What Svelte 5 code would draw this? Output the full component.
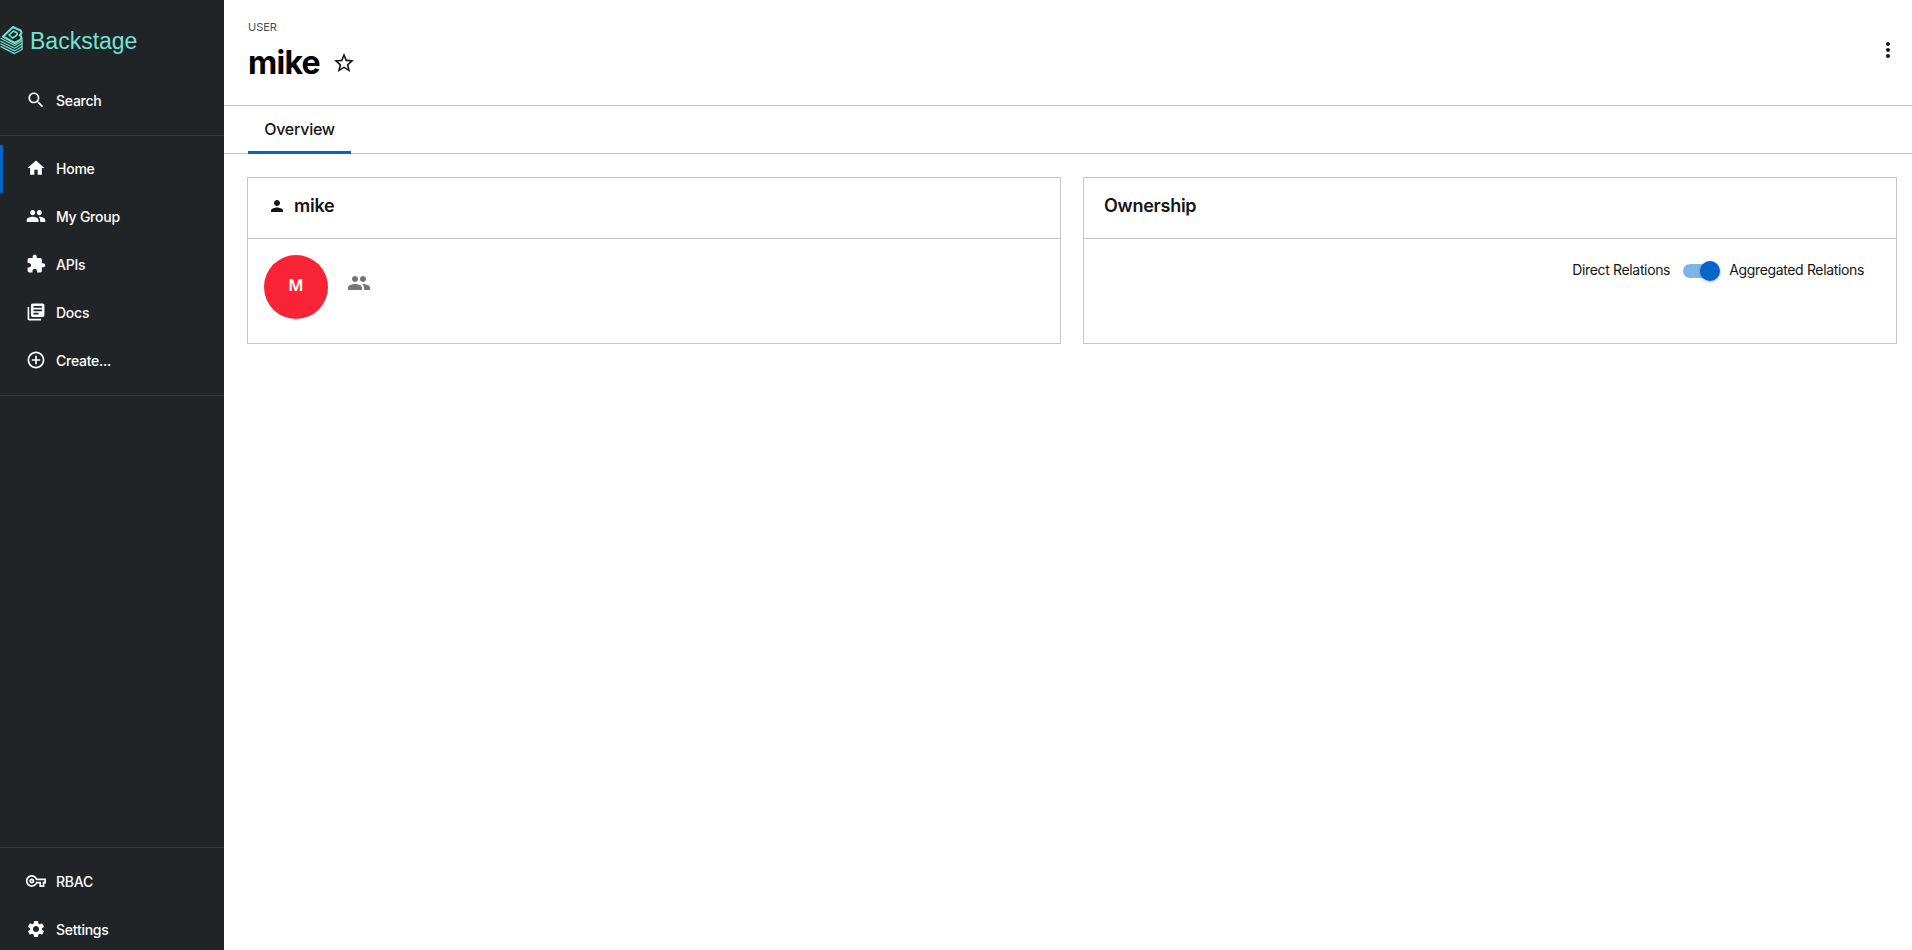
<script>
	const icons = {
		search: 'M15.5 14h-.79l-.28-.27C15.41 12.59 16 11.11 16 9.5 16 5.91 13.09 3 9.5 3S3 5.91 3 9.5 5.91 16 9.5 16c1.61 0 3.09-.59 4.23-1.57l.27.28v.79l5 4.99L20.49 19l-4.99-5zm-6 0C7.01 14 5 11.99 5 9.5S7.01 5 9.5 5 14 7.01 14 9.5 11.99 14 9.5 14z',
		home: 'M10 20v-6h4v6h5v-8h3L12 3 2 12h3v8z',
		group: 'M16 11c1.66 0 2.99-1.34 2.99-3S17.66 5 16 5c-1.66 0-3 1.34-3 3s1.34 3 3 3zm-8 0c1.66 0 2.99-1.34 2.99-3S9.66 5 8 5C6.34 5 5 6.34 5 8s1.34 3 3 3zm0 2c-2.33 0-7 1.17-7 3.5V19h14v-2.5c0-2.33-4.67-3.5-7-3.5zm8 0c-.29 0-.62.02-.97.05 1.16.84 1.97 1.97 1.97 3.45V19h6v-2.5c0-2.33-4.67-3.5-7-3.5z',
		extension: 'M20.5 11H19V7c0-1.1-.9-2-2-2h-4V3.5C13 2.12 11.88 1 10.5 1S8 2.12 8 3.5V5H4c-1.1 0-1.99.9-1.99 2v3.8H3.5c1.49 0 2.7 1.21 2.7 2.7s-1.21 2.7-2.7 2.7H2V20c0 1.1.9 2 2 2h3.8v-1.5c0-1.49 1.21-2.7 2.7-2.7 1.49 0 2.7 1.21 2.7 2.7V22H17c1.1 0 2-.9 2-2v-4h1.5c1.38 0 2.5-1.12 2.5-2.5S21.88 11 20.5 11z',
		docs: 'M4 6H2v14c0 1.1.9 2 2 2h14v-2H4V6zm16-4H8c-1.1 0-2 .9-2 2v12c0 1.1.9 2 2 2h12c1.1 0 2-.9 2-2V4c0-1.1-.9-2-2-2zm-1 9H9V9h10v2zm-4 4H9v-2h6v2zm4-8H9V5h10v2z',
		create: 'M13 7h-2v4H7v2h4v4h2v-4h4v-2h-4V7zm-1-5C6.48 2 2 6.48 2 12s4.48 10 10 10 10-4.48 10-10S17.52 2 12 2zm0 18c-4.41 0-8-3.59-8-8s3.59-8 8-8 8 3.59 8 8-3.59 8-8 8z',
		key: 'M22 19h-6v-4h-2.68c-1.14 2.42-3.6 4-6.32 4-3.86 0-7-3.14-7-7s3.14-7 7-7c2.72 0 5.17 1.58 6.32 4H24v6h-2v4zm-4-2h2v-4h2v-2H11.94l-.23-.67C11.01 8.34 9.11 7 7 7c-2.76 0-5 2.24-5 5s2.24 5 5 5c2.11 0 4.01-1.34 4.71-3.33l.23-.67H18v4zM7 15c-1.65 0-3-1.35-3-3s1.35-3 3-3 3 1.35 3 3-1.35 3-3 3zm0-4c-.55 0-1 .45-1 1s.45 1 1 1 1-.45 1-1-.45-1-1-1z',
		settings: 'M19.14 12.94c.04-.3.06-.61.06-.94 0-.32-.02-.64-.07-.94l2.03-1.58c.18-.14.23-.41.12-.61l-1.92-3.32c-.12-.22-.37-.29-.59-.22l-2.39.96c-.5-.38-1.03-.7-1.62-.94l-.36-2.54c-.04-.24-.24-.41-.48-.41h-3.84c-.24 0-.43.17-.47.41l-.36 2.54c-.59.24-1.13.57-1.62.94l-2.39-.96c-.22-.08-.47 0-.59.22L2.74 8.87c-.12.21-.08.47.12.61l2.03 1.58c-.05.3-.09.63-.09.94s.02.64.07.94l-2.03 1.58c-.18.14-.23.41-.12.61l1.92 3.32c.12.22.37.29.59.22l2.39-.96c.5.38 1.03.7 1.62.94l.36 2.54c.05.24.24.41.48.41h3.84c.24 0 .44-.17.47-.41l.36-2.54c.59-.24 1.13-.56 1.62-.94l2.39.96c.22.08.47 0 .59-.22l1.92-3.32c.12-.22.07-.47-.12-.61l-2.01-1.58zM12 15.6c-1.98 0-3.6-1.62-3.6-3.6s1.62-3.6 3.6-3.6 3.6 1.62 3.6 3.6-1.62 3.6-3.6 3.6z',
		star: 'M22 9.24l-7.19-.62L12 2 9.19 8.63 2 9.24l5.46 4.73L5.82 21 12 17.27 18.18 21l-1.64-7.03L22 9.24zM12 15.4l-3.76 2.27 1-4.28-3.32-2.88 4.38-.38L12 6.1l1.71 4.04 4.38.38-3.32 2.88 1 4.28L12 15.4z',
		more: 'M12 8c1.1 0 2-.9 2-2s-.9-2-2-2-2 .9-2 2 .9 2 2 2zm0 2c-1.1 0-2 .9-2 2s.9 2 2 2 2-.9 2-2-.9-2-2-2zm0 6c-1.1 0-2 .9-2 2s.9 2 2 2 2-.9 2-2-.9-2-2-2z',
		person: 'M12 12c2.21 0 4-1.79 4-4s-1.79-4-4-4-4 1.79-4 4 1.79 4 4 4zm0 2c-2.67 0-8 1.34-8 4v2h16v-2c0-2.66-5.33-4-8-4z'
	};

	const main_nav = [
		{ label: 'Home', icon: icons.home, active: true },
		{ label: 'My Group', icon: icons.group },
		{ label: 'APIs', icon: icons.extension },
		{ label: 'Docs', icon: icons.docs },
		{ label: 'Create...', icon: icons.create }
	];

	const bottom_nav = [
		{ label: 'RBAC', icon: icons.key },
		{ label: 'Settings', icon: icons.settings }
	];
</script>

{#snippet icon(d, cls = '')}
	<svg class={cls} viewBox="0 0 24 24" aria-hidden="true"><path {d} /></svg>
{/snippet}

{#snippet nav_item(item)}
	<a class="nav-item" class:active={item.active} href="#top">
		{@render icon(item.icon, 'nav-icon')}
		<span>{item.label}</span>
	</a>
{/snippet}

<div class="page">
	<aside class="sidebar">
		<div class="logo">
			<svg class="logo-mark" viewBox="0 0 24 30" aria-hidden="true">
				<g fill="none" stroke="currentColor" stroke-linejoin="round" stroke-linecap="round">
					<g stroke-width="1.2">
						<path d="M1 13.5 L14.5 20.5 L22 16" />
						<path d="M0.7 16.2 L14.5 23.2 L22 18.8" />
						<path d="M0.7 18.9 L14.5 25.9 L22 21.6" />
						<path d="M1 21.6 L14.5 28.6 L22 24.4" />
						<path d="M22 13 L22 24.4" />
					</g>
					<g stroke-width="2.1">
						<path d="M3 11.5 L13 2 L20.5 5.5 Q22.8 7.6 19.8 10.2 Q22.8 12.3 20.2 14.8 L14.5 18 Z" />
						<path d="M9 10 L13.5 6 L16.8 7.8 Q18 9.2 16 10.8 L12.5 13 Z" stroke-width="1.6" />
					</g>
				</g>
			</svg>
			<span>Backstage</span>
		</div>
		<a class="nav-item" href="#top">
			{@render icon(icons.search, 'nav-icon')}
			<span>Search</span>
		</a>
		<div class="divider search-divider"></div>
		<nav>
			{#each main_nav as item}
				{@render nav_item(item)}
			{/each}
		</nav>
		<div class="divider nav-divider"></div>
		<div class="spacer"></div>
		<div class="divider bottom-divider"></div>
		<nav class="bottom-nav">
			{#each bottom_nav as item}
				{@render nav_item(item)}
			{/each}
		</nav>
	</aside>

	<main>
		<header>
			<div>
				<div class="kind">USER</div>
				<div class="title-row">
					<h1>mike</h1>
					{@render icon(icons.star, 'star')}
				</div>
			</div>
			{@render icon(icons.more, 'more')}
		</header>

		<div class="tabs">
			<div class="tab">Overview</div>
		</div>

		<div class="content">
			<section class="card">
				<div class="card-head">
					{@render icon(icons.person, 'person')}
					<h2>mike</h2>
				</div>
				<div class="card-body user-body">
					<div class="avatar">M</div>
					{@render icon(icons.group, 'member')}
				</div>
			</section>

			<section class="card">
				<div class="card-head">
					<h2>Ownership</h2>
				</div>
				<div class="card-body owner-body">
					<span>Direct Relations</span>
					<div class="switch"><div class="thumb"></div></div>
					<span>Aggregated Relations</span>
				</div>
			</section>
		</div>
	</main>
</div>

<style>
	:global(body) {
		margin: 0;
		background: #fff;
		font-family: Inter, 'Liberation Sans', sans-serif;
	}

	.page {
		display: flex;
		height: 950px;
		overflow: hidden;
	}

	svg {
		display: block;
		fill: currentColor;
		flex: none;
	}

	.sidebar {
		width: 224px;
		flex: none;
		display: flex;
		flex-direction: column;
		background: #212427;
		color: #fff;
	}

	.logo {
		height: 76px;
		box-sizing: border-box;
		padding-top: 7px;
		display: flex;
		align-items: center;
		gap: 6px;
		color: #6fe3d1;
		font-family: 'Liberation Sans', sans-serif;
		font-size: 23px;
	}

	.logo-mark {
		width: 24px;
		height: 30px;
		margin-top: -3px;
		fill: none;
	}

	.nav-item {
		height: 48px;
		display: flex;
		align-items: center;
		padding-left: 24px;
		gap: 8px;
		color: #fff;
		text-decoration: none;
		font-size: 14px;
		font-weight: 500;
		letter-spacing: -0.25px;
		box-sizing: border-box;
	}

	nav .nav-item {
		padding-bottom: 2px;
	}

	.nav-item.active {
		border-left: 3px solid #0066cc;
		padding-left: 21px;
	}

	.nav-item :global(.nav-icon) {
		width: 24px;
		height: 24px;
		transform: scale(0.84);
	}

	.divider {
		height: 1px;
		background: #383b3e;
		flex: none;
	}

	.search-divider {
		margin-top: 11px;
		margin-bottom: 9px;
	}

	.nav-divider {
		margin-top: 10px;
	}

	.spacer {
		flex: 1;
	}

	.bottom-divider {
		margin-bottom: 10px;
	}

	.bottom-nav {
		margin-bottom: -4px;
	}

	main {
		flex: 1;
		min-width: 0;
		display: flex;
		flex-direction: column;
	}

	header {
		border-bottom: 1px solid #c7c7c7;
		display: flex;
		justify-content: space-between;
		padding: 21px 12px 0 24px;
		height: 84px;
	}

	.kind {
		font-size: 11px;
		line-height: 13px;
		color: #4d4d4d;
	}

	.title-row {
		display: flex;
		align-items: center;
		gap: 12px;
		margin-top: 8px;
	}

	h1 {
		margin: 0;
		font-size: 32px;
		line-height: 42px;
		font-weight: 700;
		letter-spacing: -0.7px;
		color: #000;
	}

	.title-row :global(.star) {
		width: 24px;
		height: 24px;
		color: #151515;
	}

	header :global(.more) {
		width: 24px;
		height: 24px;
		color: #151515;
		margin-top: 17px;
	}

	.tabs {
		height: 47px;
		border-bottom: 1px solid #c7c7c7;
		padding-left: 24px;
		display: flex;
	}

	.tab {
		width: 103px;
		box-sizing: border-box;
		height: 48px;
		border-bottom: 3px solid #0066cc;
		text-align: center;
		font-size: 16px;
		font-weight: 500;
		letter-spacing: -0.25px;
		line-height: 46px;
		color: #151515;
	}

	.content {
		display: grid;
		grid-template-columns: 1fr 1fr;
		gap: 22px;
		padding: 23px 15px 0 23px;
	}

	.card {
		border: 1px solid #c7c7c7;
		height: 167px;
		box-sizing: border-box;
		display: flex;
		flex-direction: column;
	}

	.card-head {
		height: 61px;
		box-sizing: border-box;
		padding: 0 0 5px 20px;
		border-bottom: 1px solid #c7c7c7;
		display: flex;
		align-items: center;
		color: #151515;
		flex: none;
	}

	h2 {
		margin: 0;
		font-size: 18px;
		font-weight: 600;
		letter-spacing: -0.25px;
		color: #151515;
	}

	.card-head :global(.person) {
		width: 18px;
		height: 18px;
		margin-right: 8px;
	}

	.card-body {
		flex: 1;
		display: flex;
	}

	.user-body {
		padding: 16px;
	}

	.avatar {
		width: 64px;
		height: 64px;
		box-sizing: border-box;
		padding-bottom: 4px;
		border-radius: 50%;
		background: #f82435;
		color: #fff;
		font-size: 16px;
		font-weight: 600;
		display: flex;
		align-items: center;
		justify-content: center;
	}

	.user-body :global(.member) {
		width: 24px;
		height: 24px;
		color: #757575;
		margin-left: 19px;
		margin-top: 16px;
	}

	.owner-body {
		justify-content: flex-end;
		align-items: flex-start;
		padding: 21px 32px 0 0;
		font-size: 14px;
		letter-spacing: -0.35px;
		color: #151515;
		line-height: 20px;
	}

	.switch {
		position: relative;
		width: 34px;
		height: 14px;
		margin: 4px 12px 0 13px;
		border-radius: 7px;
		background: #80b3e6;
	}

	.thumb {
		position: absolute;
		right: -3px;
		top: -3px;
		width: 20px;
		height: 20px;
		border-radius: 50%;
		background: #0066cc;
		box-shadow: 0 1px 3px rgba(0, 0, 0, 0.3);
	}
</style>
